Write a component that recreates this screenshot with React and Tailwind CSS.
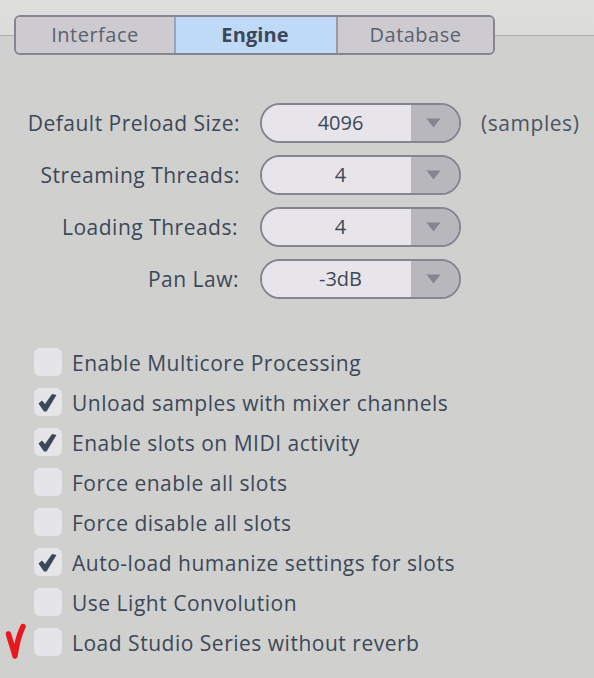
const font = { fontFamily: '"Open Sans", sans-serif' };

const selects = [
  { label: "Default Preload Size:", value: "4096", suffix: "(samples)", labelW: "w-[240px] mr-5" },
  { label: "Streaming Threads:", value: "4", labelW: "w-[240px] mr-5" },
  { label: "Loading Threads:", value: "4", labelW: "w-[238px] mr-[22px]" },
  { label: "Pan Law:", value: "-3dB", labelW: "w-[239px] mr-[21px]" },
];

const options = [
  { label: "Enable Multicore Processing", checked: false },
  { label: "Unload samples with mixer channels", checked: true },
  { label: "Enable slots on MIDI activity", checked: true },
  { label: "Force enable all slots", checked: false },
  { label: "Force disable all slots", checked: false },
  { label: "Auto-load humanize settings for slots", checked: true },
  { label: "Use Light Convolution", checked: false },
  { label: "Load Studio Series without reverb", checked: false, marked: true },
];

const Tab = ({ label, active, className }) => (
  <div
    className={`flex items-center justify-center text-[20px] ${
      active
        ? "bg-[#bfdaf6] pr-[2px] font-bold tracking-[0.1px] text-[#3c4859]"
        : "bg-[#cdcbd0] font-medium tracking-[0.5px] text-[#5a6270]"
    } ${className}`}
  >
    {label}
  </div>
);

const SelectRow = ({ label, value, suffix, labelW }) => (
  <div className="flex h-10 items-center">
    <div className={`${labelW} shrink-0 pt-[2px] text-right text-[21px] tracking-[0.5px] text-[#3c4859]`}>{label}</div>
    <div className="flex h-10 w-[201px] shrink-0 overflow-hidden rounded-[20px] border-2 border-[#858490]">
      <div className="flex w-[149px] items-center justify-center bg-[#e7e5ea] pl-2 text-[20px] font-medium text-[#3c4859]">
        {value}
      </div>
      <div className="flex flex-1 items-center justify-center bg-[#b8b7bc] pr-1">
        <svg width="15" height="10" viewBox="0 0 15 10">
          <path d="M0.5 0.5H14.5L7.5 9.5Z" fill="#858490" />
        </svg>
      </div>
    </div>
    {suffix && <div className="ml-5 pt-[2px] text-[21px] tracking-[0.55px] text-[#4a5565]">{suffix}</div>}
  </div>
);

const CheckRow = ({ label, checked, marked }) => (
  <div className="relative flex h-7 items-center">
    {marked && (
      <svg className="absolute left-[-30px] top-[-5px]" width="24" height="40" viewBox="0 0 24 40">
        <path d="M4.5 11C6 17 9 25 11 33C12 25 15 12 19 3.5" fill="none" stroke="#e8181c" strokeWidth="5.5" strokeLinecap="round" strokeLinejoin="round" />
      </svg>
    )}
    <div className="flex size-7 shrink-0 items-center justify-center rounded-[6px] bg-[#e5e4e9]">
      {checked && (
        <svg width="28" height="28" viewBox="0 0 28 28">
          <path d="M4.5 15.5L8 12.5L11 16L18 6L22.5 7L12.5 23.5L10 23.5Z" fill="#3c4859" />
        </svg>
      )}
    </div>
    <div className="ml-[10px] whitespace-nowrap pt-[3px] text-[21px] tracking-[0.51px] text-[#3c4859]">{label}</div>
  </div>
);

export default function App() {
  return (
    <div className="h-[678px] w-[594px] overflow-hidden bg-[#d0d0ce]" style={font}>
      <div className="h-9 border-b border-[#aeaeac] bg-gradient-to-b from-[#dededc] to-[#dcdcda]" />
      <div className="mx-[14px] -mt-[21px] flex h-10 w-[481px] overflow-hidden rounded-[6px] border-2 border-[#858490]">
        <Tab label="Interface" className="w-[160px] border-r-2 border-[#9aa5b5]" />
        <Tab label="Engine" active className="w-[160px]" />
        <Tab label="Database" className="flex-1 border-l-2 border-[#9a9aa3]" />
      </div>
      <div className="mt-12 flex flex-col gap-3">
        {selects.map((s) => (
          <SelectRow key={s.label} {...s} />
        ))}
      </div>
      <div className="ml-[34px] mt-[49px] flex flex-col gap-3">
        {options.map((o) => (
          <CheckRow key={o.label} {...o} />
        ))}
      </div>
    </div>
  );
}
